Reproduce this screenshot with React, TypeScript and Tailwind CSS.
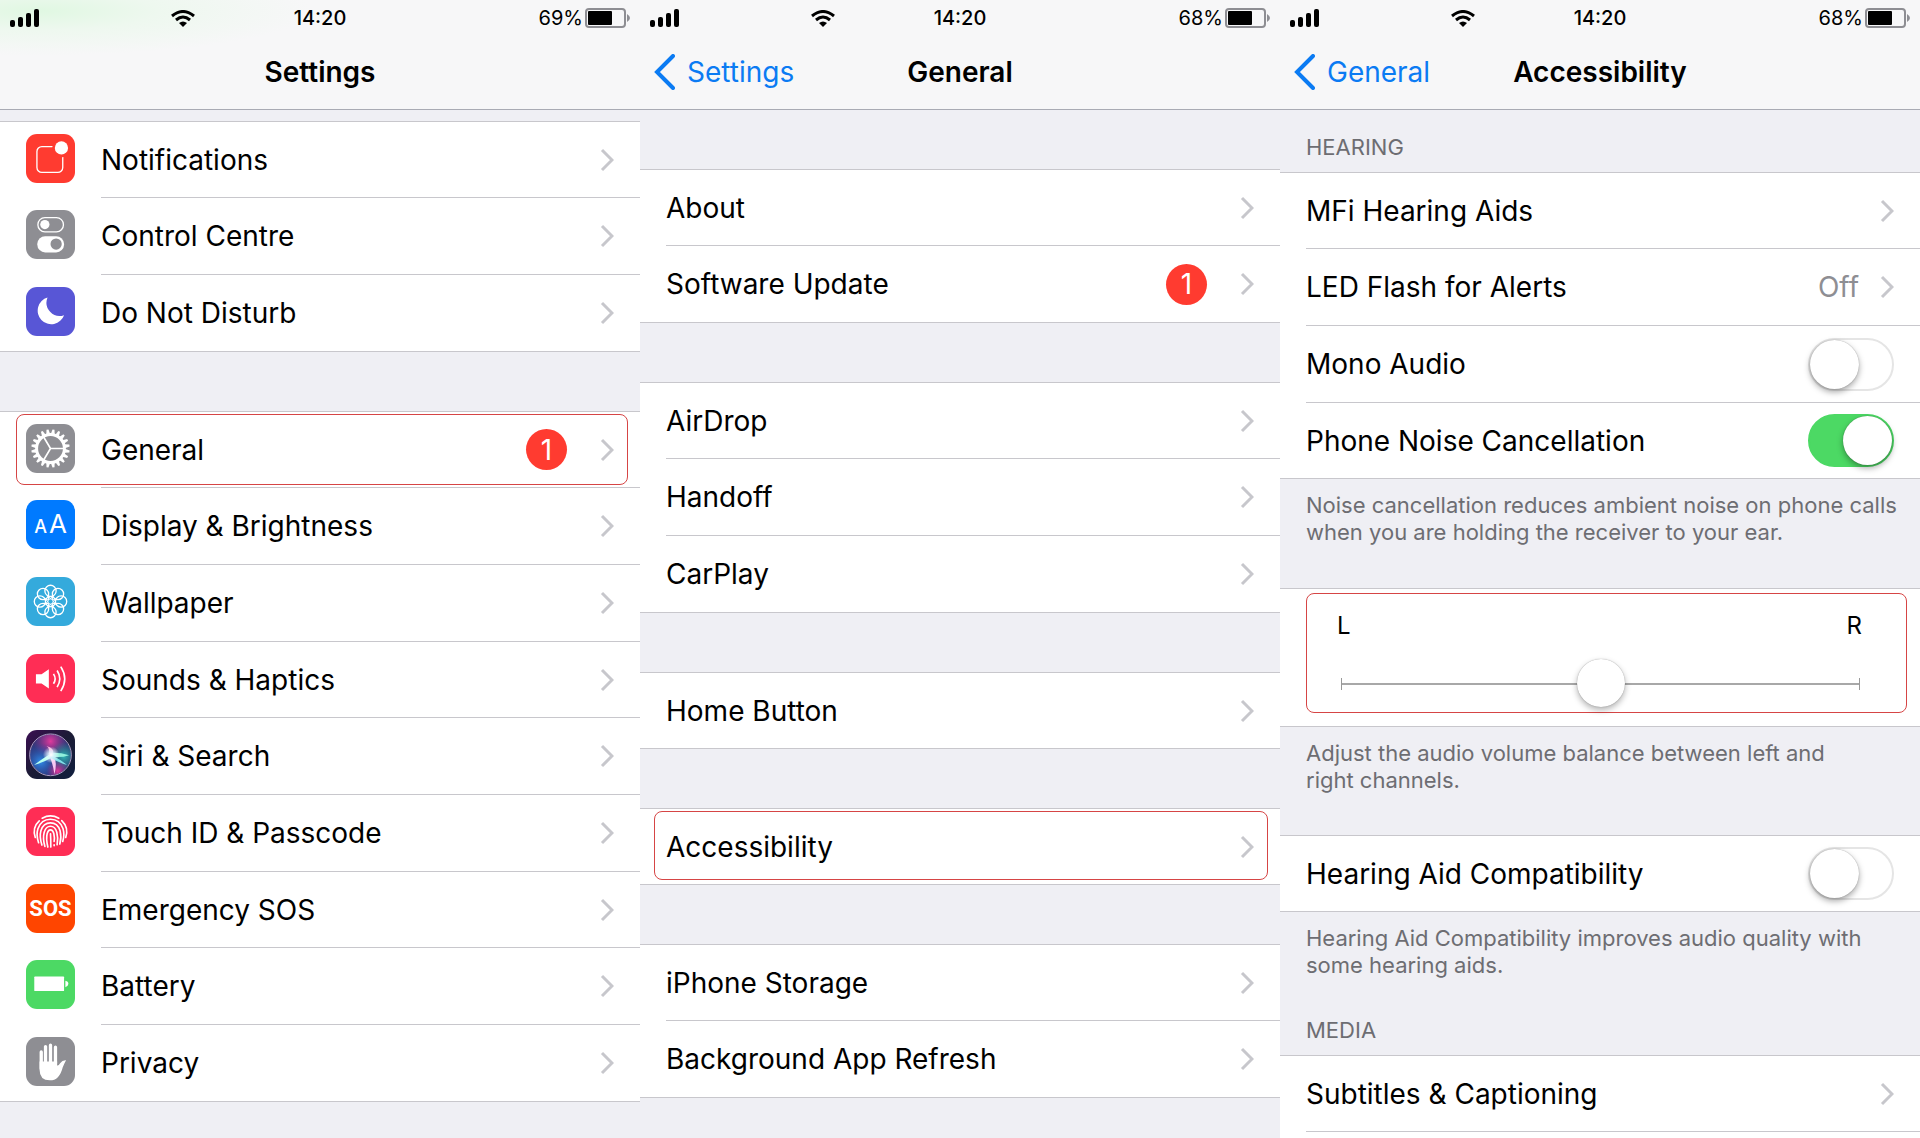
import React from 'react';

const iconBase = 'size-[49px] shrink-0 rounded-[11px] overflow-hidden';

function NotificationsIcon() {
  return (
    <svg viewBox="0 0 148 148" className={`${iconBase} bg-[#ff3b30]`} fill="none">
      <rect x="33" y="38" width="78" height="78" rx="15" stroke="#fff" strokeWidth="4" />
      <circle cx="107" cy="42" r="28" fill="#ff3b30" />
      <circle cx="107" cy="42" r="20" fill="#fff" />
    </svg>
  );
}

function ControlCentreIcon() {
  return (
    <svg viewBox="0 0 148 148" className={`${iconBase} bg-[#8e8e93]`} fill="none">
      <rect x="36" y="23" width="77" height="43" rx="21" stroke="#fff" strokeWidth="4" />
      <circle cx="57" cy="44" r="14" fill="#fff" />
      <rect x="34" y="79" width="81" height="49" rx="24" fill="#fff" />
      <circle cx="91" cy="103" r="17" fill="#8e8e93" />
    </svg>
  );
}

function MoonIcon() {
  return (
    <svg viewBox="0 0 148 148" className={`${iconBase} bg-[#5856d6]`}>
      <path d="M65 32A41 41 0 1 0 115 85A40 40 0 0 1 65 32Z" fill="#fff" />
    </svg>
  );
}

function GearIcon() {
  const teeth = Array.from({ length: 20 }, (_, i) => i * 18 + 9);
  return (
    <svg viewBox="0 0 148 148" className={`${iconBase} bg-[#8e8e93]`} fill="none">
      <circle cx="74" cy="74" r="42" stroke="#fff" strokeWidth="9" />
      {teeth.map((angle) => (
        <path key={angle} d="M68 31L71 16H77L80 31Z" fill="#fff" transform={`rotate(${angle} 74 74)`} />
      ))}
      <path d="M74 74H117M74 74L52 37M74 74L52 111" stroke="#fff" strokeWidth="5" />
    </svg>
  );
}

function DisplayIcon() {
  return (
    <span aria-hidden="true" className={`${iconBase} bg-[#007aff] flex items-baseline justify-center gap-0.5 pt-1.5 text-white`}>
      <span className="text-lg leading-9 font-medium">A</span>
      <span className="text-[26px] leading-9">A</span>
    </span>
  );
}

function WallpaperIcon() {
  const petals = [0, 45, 90, 135, 180, 225, 270, 315];
  return (
    <svg viewBox="0 0 148 148" className={`${iconBase} bg-[#34aadc]`} fill="none" stroke="#fff" strokeWidth="4">
      {petals.map((angle) => (
        <circle key={angle} cx="74" cy="42" r="17" transform={`rotate(${angle} 74 74)`} />
      ))}
      {petals.map((angle) => (
        <path key={angle} d="M74 66L65 56M74 66L83 56" strokeWidth="3" transform={`rotate(${angle} 74 74)`} />
      ))}
      <circle cx="74" cy="74" r="8" strokeWidth="3" />
    </svg>
  );
}

function SoundsIcon() {
  return (
    <svg viewBox="0 0 148 148" className={`${iconBase} bg-[#ff2d55]`} fill="none">
      <path d="M30 61H47L69 46V104L47 89H30Z" fill="#fff" />
      <path d="M83 60Q93 75 83 90M94 50Q110 75 94 100M105 38Q129 75 105 112" stroke="#fff" strokeWidth="5" />
    </svg>
  );
}

function SiriIcon() {
  return (
    <svg viewBox="0 0 148 148" className={iconBase}>
      <defs>
        <linearGradient id="siri-back" x1="0" y1="0" x2="1" y2="1">
          <stop offset="0" stopColor="#3b0f52" />
          <stop offset="0.5" stopColor="#1b1b35" />
          <stop offset="1" stopColor="#101f3f" />
        </linearGradient>
        <radialGradient id="siri-pink">
          <stop offset="0" stopColor="#e03a9c" />
          <stop offset="1" stopColor="#a22a90" stopOpacity="0" />
        </radialGradient>
        <radialGradient id="siri-blue">
          <stop offset="0" stopColor="#2f8be8" />
          <stop offset="1" stopColor="#1d4fb0" stopOpacity="0" />
        </radialGradient>
        <radialGradient id="siri-teal">
          <stop offset="0" stopColor="#2fb3b0" />
          <stop offset="1" stopColor="#1b8f8f" stopOpacity="0" />
        </radialGradient>
        <radialGradient id="siri-glow">
          <stop offset="0" stopColor="#fff" />
          <stop offset="0.4" stopColor="#dff4ff" stopOpacity="0.8" />
          <stop offset="1" stopColor="#fff" stopOpacity="0" />
        </radialGradient>
        <clipPath id="siri-clip">
          <circle cx="74" cy="75" r="62" />
        </clipPath>
      </defs>
      <rect width="148" height="148" fill="url(#siri-back)" />
      <g clipPath="url(#siri-clip)">
        <circle cx="74" cy="75" r="62" fill="#33387a" />
        <circle cx="74" cy="34" r="52" fill="url(#siri-pink)" />
        <circle cx="44" cy="96" r="56" fill="url(#siri-blue)" />
        <circle cx="114" cy="80" r="44" fill="url(#siri-teal)" />
        <circle cx="96" cy="124" r="34" fill="url(#siri-pink)" />
        <path d="M74 72Q48 88 24 106Q52 98 80 82Z" fill="#b8fff0" />
        <path d="M70 76Q82 104 86 134Q95 100 84 74Z" fill="#f7c6f2" />
        <path d="M76 69Q104 68 130 76Q104 85 78 80Z" fill="#8ff0dc" />
        <path d="M78 76Q106 90 124 106Q98 98 72 82Z" fill="#7fe0e8" />
        <path d="M68 74Q74 56 62 48Q86 54 82 72Z" fill="#f7a8d8" />
        <circle cx="76" cy="75" r="25" fill="url(#siri-glow)" />
      </g>
      <circle cx="74" cy="75" r="63" fill="none" stroke="#a99cc4" strokeWidth="3" />
    </svg>
  );
}

function TouchIdIcon() {
  return (
    <svg viewBox="0 0 148 148" className={`${iconBase} bg-[#ff2d55]`} fill="none" stroke="#fff" strokeWidth="5" strokeLinecap="round">
      <path d="M49 34Q74 20 99 34" />
      <path d="M28 92Q18 62 40 42M108 41Q130 62 120 92" />
      <path d="M38 108Q30 84 36 66Q46 37 74 37Q102 37 112 66Q117 84 111 104" />
      <path d="M48 115Q40 90 45 72Q52 48 74 48Q96 48 103 72Q108 92 102 112" />
      <path d="M57 119Q50 94 55 76Q60 58 74 58Q88 58 93 76Q98 94 94 114" />
      <path d="M66 121Q60 96 64 80Q67 69 74 69Q81 69 84 80Q87 94 85 104M85 114V117" />
      <path d="M75 121Q75 98 74 81" />
    </svg>
  );
}

function SosIcon() {
  return (
    <span aria-hidden="true" className={`${iconBase} bg-[#ff4500] flex items-center justify-center text-white text-[22px] font-bold font-['Liberation_Sans_Narrow','Roboto',sans-serif]`}>
      SOS
    </span>
  );
}

function BatteryIcon() {
  return (
    <svg viewBox="0 0 148 148" className={`${iconBase} bg-[#4cd964]`} fill="#fff">
      <rect x="25" y="50" width="90" height="44" rx="2" />
      <path d="M119 63Q128 65 128 72T119 82Z" />
    </svg>
  );
}

function PrivacyIcon() {
  return (
    <svg viewBox="0 0 148 148" className={`${iconBase} bg-[#8e8e93]`} fill="none">
      <path d="M46 45V95M59 29V80M74 25V80M89 31V80" stroke="#fff" strokeWidth="10" strokeLinecap="round" />
      <path d="M41 74H94V86Q98 88 103 79Q110 69 121 70Q117 77 111 91Q101 131 72 131Q41 131 41 99Z" fill="#fff" />
    </svg>
  );
}

function Chevron() {
  return (
    <svg viewBox="0 0 14 24" className="w-3.5 h-6 shrink-0" fill="none" stroke="#c7c7cc" strokeWidth="3">
      <path d="M2 2L12 12L2 22" />
    </svg>
  );
}

function StatusBar({ battery }: { battery: string }) {
  return (
    <div className="grid grid-cols-[1fr_auto_1fr] items-center h-9 pl-2.5 pr-2.5">
      <div className="flex items-center">
        <svg viewBox="0 0 29 18" className="w-[29px] h-[18px]">
          <rect x="0" y="11" width="5" height="7" rx="2" />
          <rect x="8" y="8" width="5" height="10" rx="2" />
          <rect x="16" y="4" width="5" height="14" rx="2" />
          <rect x="24" y="0" width="5" height="18" rx="2" />
        </svg>
        <svg viewBox="0 0 24 17" className="w-6 h-[17px] ml-33" fill="none" stroke="#000" strokeWidth="3">
          <path d="M1 6Q12 -3 23 6M5 10Q12 4 19 10" />
          <path d="M8 13Q12 10 16 13L12 17Z" fill="#000" stroke="none" />
        </svg>
      </div>
      <span className="text-xl leading-9 font-medium">14:20</span>
      <div className="flex items-center justify-end gap-0.5">
        <span className="text-xl leading-9">{battery}</span>
        <svg viewBox="0 0 45 20" className="w-[45px] h-5">
          <rect x="1" y="1" width="39" height="18" rx="3" fill="none" stroke="#8e8e93" strokeWidth="2" />
          <rect x="3" y="3" width="24" height="14" rx="1" />
          <path d="M42 6Q45 8 45 10T42 14Z" fill="#8e8e93" />
        </svg>
      </div>
    </div>
  );
}

type HeaderProps = {
  title: string;
  battery: string;
  back?: string;
  className?: string;
};

function Header({ title, battery, back, className = 'bg-[#f7f7f8]' }: HeaderProps) {
  return (
    <header className={`border-b border-[#a9abb4] ${className}`}>
      <StatusBar battery={battery} />
      <div className="grid grid-cols-[1fr_auto_1fr] items-center h-[73px] px-3.5 pb-0.5">
        <div>
          {back && (
            <button className="flex items-center gap-3 text-[28px] leading-9 text-[#0b7bf3]">
              <svg viewBox="0 0 21 36" className="w-[21px] h-9" fill="none" stroke="currentColor" strokeWidth="4">
                <path d="M19 2L3 18L19 34" strokeLinecap="round" />
              </svg>
              {back}
            </button>
          )}
        </div>
        <h1 className="text-[28px] leading-9 font-semibold">{title}</h1>
      </div>
    </header>
  );
}

function List({ children, className = '' }: { children: React.ReactNode; className?: string }) {
  return <ul className={`bg-white border-t border-[#c8c7cc] ${className}`}>{children}</ul>;
}

type RowProps = {
  label: string;
  icon?: React.ReactNode;
  badge?: number;
  value?: string;
  toggle?: boolean;
  highlight?: string;
};

function Row({ label, icon, badge, value, toggle, highlight }: RowProps) {
  const content = (
    <>
      <span className="flex-1">{label}</span>
      {badge && (
        <span className="size-[41px] mr-[33px] rounded-full bg-[#ff3b30] text-white flex items-center justify-center">
          {badge}
        </span>
      )}
      {value && <span className="mr-[21px] text-[#8e8e93]">{value}</span>}
    </>
  );
  const line =
    'flex-1 h-full flex items-center pr-[26px] border-b border-[#c8c7cc] group-last:border-b-0 text-[28px] leading-9';

  return (
    <li className="group relative flex h-[77px] nth-[3n+1]:h-19 pl-[26px] last:border-b last:border-[#c8c7cc]">
      {toggle !== undefined ? (
        <label className={line}>
          {content}
          <input
            type="checkbox"
            role="switch"
            defaultChecked={toggle}
            className="appearance-none flex items-center w-[86px] h-[53px] rounded-full border-2 border-[#e5e5e5] bg-white checked:bg-[#4cd964] checked:border-[#4cd964] before:size-[49px] before:rounded-full before:bg-white before:shadow-[0_3px_6px_rgba(0,0,0,0.35),0_0_1px_rgba(0,0,0,0.4)] checked:before:ml-[33px]"
          />
        </label>
      ) : (
        <a href="#" className="flex-1 flex items-center">
          {icon && <span className="flex pb-1 mr-[26px]">{icon}</span>}
          <span className={line}>
            {content}
            <Chevron />
          </span>
        </a>
      )}
      {highlight && (
        <span className={`absolute top-0.5 rounded-lg border border-[#d64545] pointer-events-none ${highlight}`} />
      )}
    </li>
  );
}

function SectionTitle({ children }: { children: React.ReactNode }) {
  return <h2 className="px-[26px] pt-6 pb-[11px] text-[22px] leading-[27px] text-[#6d6d72]">{children}</h2>;
}

function FootNote({ children }: { children: React.ReactNode }) {
  return (
    <p className="pl-[26px] pr-3.5 pt-[13px] pb-3.5 text-[22px] leading-[27px] text-[#6d6d72] whitespace-pre-line">
      {children}
    </p>
  );
}

function SettingsScreen() {
  return (
    <section className="flex flex-col">
      <Header
        title="Settings"
        battery="69%"
        className="bg-[#f7f7f8] bg-[radial-gradient(ellipse_at_6%_10%,#e0f8e2_0%,#eef8ef_14%,#f7f7f8_32%)]"
      />
      <div className="flex flex-col gap-[59px] pt-[11px]">
        <List>
          <Row label="Notifications" icon={<NotificationsIcon />} />
          <Row label="Control Centre" icon={<ControlCentreIcon />} />
          <Row label="Do Not Disturb" icon={<MoonIcon />} />
        </List>
        <List>
          <Row label="General" icon={<GearIcon />} badge={1} highlight="left-4 right-3 bottom-[3px]" />
          <Row label="Display & Brightness" icon={<DisplayIcon />} />
          <Row label="Wallpaper" icon={<WallpaperIcon />} />
          <Row label="Sounds & Haptics" icon={<SoundsIcon />} />
          <Row label="Siri & Search" icon={<SiriIcon />} />
          <Row label="Touch ID & Passcode" icon={<TouchIdIcon />} />
          <Row label="Emergency SOS" icon={<SosIcon />} />
          <Row label="Battery" icon={<BatteryIcon />} />
          <Row label="Privacy" icon={<PrivacyIcon />} />
        </List>
      </div>
    </section>
  );
}

function GeneralScreen() {
  return (
    <section className="flex flex-col">
      <Header title="General" battery="68%" back="Settings" />
      <div className="flex flex-col gap-[59px] pt-[59px]">
        <List>
          <Row label="About" />
          <Row label="Software Update" badge={1} />
        </List>
        <List>
          <Row label="AirDrop" />
          <Row label="Handoff" />
          <Row label="CarPlay" />
        </List>
        <List>
          <Row label="Home Button" />
        </List>
        <List>
          <Row label="Accessibility" highlight="left-3.5 right-3 bottom-1" />
        </List>
        <List>
          <Row label="iPhone Storage" />
          <Row label="Background App Refresh" />
        </List>
      </div>
    </section>
  );
}

function BalanceSlider() {
  return (
    <li className="pl-[26px] pr-[13px] pt-1 pb-[13px] border-b border-[#c8c7cc]">
      <div className="h-[120px] px-[30px] pt-4 rounded-lg border border-[#d64545] text-2xl leading-8">
        <div className="flex justify-between pr-3.5">
          <span>L</span>
          <span>R</span>
        </div>
        <div className="flex items-center h-[49px] mt-[17px] ml-1 mr-4">
          <span className="w-px h-3 bg-[#999]" />
          <input
            type="range"
            aria-label="Audio volume balance"
            defaultValue={50}
            className="flex-1 appearance-none h-[49px] bg-transparent [&::-webkit-slider-runnable-track]:h-0.5 [&::-webkit-slider-runnable-track]:bg-[#a8a8a8] [&::-webkit-slider-thumb]:appearance-none [&::-webkit-slider-thumb]:size-12 [&::-webkit-slider-thumb]:-mt-6 [&::-webkit-slider-thumb]:rounded-full [&::-webkit-slider-thumb]:bg-white [&::-webkit-slider-thumb]:shadow-[0_3px_6px_rgba(0,0,0,0.3),0_0_1px_rgba(0,0,0,0.4)]"
          />
          <span className="w-px h-3 bg-[#999]" />
        </div>
      </div>
    </li>
  );
}

function AccessibilityScreen() {
  return (
    <section className="flex flex-col">
      <Header title="Accessibility" battery="68%" back="General" />
      <SectionTitle>HEARING</SectionTitle>
      <List>
        <Row label="MFi Hearing Aids" />
        <Row label="LED Flash for Alerts" value="Off" />
        <Row label="Mono Audio" toggle={false} />
        <Row label="Phone Noise Cancellation" toggle={true} />
      </List>
      <FootNote>{'Noise cancellation reduces ambient noise on phone calls\nwhen you are holding the receiver to your ear.'}</FootNote>
      <List className="mt-7">
        <BalanceSlider />
      </List>
      <FootNote>{'Adjust the audio volume balance between left and\nright channels.'}</FootNote>
      <List className="mt-[27px]">
        <Row label="Hearing Aid Compatibility" toggle={false} />
      </List>
      <FootNote>{'Hearing Aid Compatibility improves audio quality with\nsome hearing aids.'}</FootNote>
      <SectionTitle>MEDIA</SectionTitle>
      <List className="flex-1">
        <Row label="Subtitles & Captioning" />
        <li />
      </List>
    </section>
  );
}

export default function App() {
  return (
    <main className="grid grid-cols-3 min-h-screen bg-[#efeff4] text-black font-['Inter',sans-serif]">
      <SettingsScreen />
      <GeneralScreen />
      <AccessibilityScreen />
    </main>
  );
}
